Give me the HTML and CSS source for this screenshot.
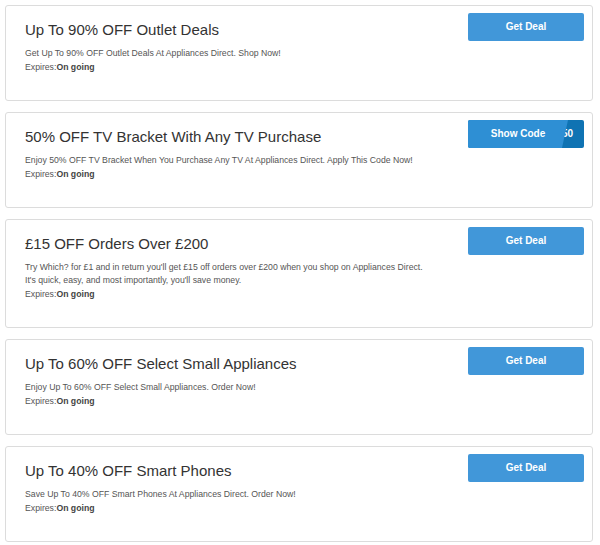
FILE: index.html
```html
<!DOCTYPE html>
<html>
<head>
<meta charset="utf-8">
<link rel="stylesheet" href="styles.css">
</head>
<body>
<div class="list">
  <div class="card">
    <div class="info">
      <h3 class="title">Up To 90% OFF Outlet Deals</h3>
      <p class="desc">Get Up To 90% OFF Outlet Deals At Appliances Direct. Shop Now!</p>
      <p class="expires">Expires:<b>On going</b></p>
    </div>
    <div class="action"><a class="btn deal">Get Deal</a></div>
  </div>
  <div class="card">
    <div class="info">
      <h3 class="title">50% OFF TV Bracket With Any TV Purchase</h3>
      <p class="desc">Enjoy 50% OFF TV Bracket When You Purchase Any TV At Appliances Direct. Apply This Code Now!</p>
      <p class="expires">Expires:<b>On going</b></p>
    </div>
    <div class="action">
      <a class="btn code"><span class="code-val">50</span><span class="code-cover">Show Code</span></a>
    </div>
  </div>
  <div class="card">
    <div class="info">
      <h3 class="title">£15 OFF Orders Over £200</h3>
      <p class="desc">Try Which? for £1 and in return you'll get £15 off orders over £200 when you shop on Appliances Direct.<br>It's quick, easy, and most importantly, you'll save money.</p>
      <p class="expires">Expires:<b>On going</b></p>
    </div>
    <div class="action"><a class="btn deal">Get Deal</a></div>
  </div>
  <div class="card">
    <div class="info">
      <h3 class="title">Up To 60% OFF Select Small Appliances</h3>
      <p class="desc">Enjoy Up To 60% OFF Select Small Appliances. Order Now!</p>
      <p class="expires">Expires:<b>On going</b></p>
    </div>
    <div class="action"><a class="btn deal">Get Deal</a></div>
  </div>
  <div class="card">
    <div class="info">
      <h3 class="title">Up To 40% OFF Smart Phones</h3>
      <p class="desc">Save Up To 40% OFF Smart Phones At Appliances Direct. Order Now!</p>
      <p class="expires">Expires:<b>On going</b></p>
    </div>
    <div class="action"><a class="btn deal">Get Deal</a></div>
  </div>
</div>
</body>
</html>
```
FILE: styles.css
```css
html, body {
  margin: 0;
  padding: 0;
  background: #fff;
}
body {
  font-family: "Liberation Sans", Arial, sans-serif;
}
.list {
  display: flex;
  flex-direction: column;
  gap: 11px;
  padding: 5px 7px 0 5px;
}
.card {
  display: flex;
  border: 1px solid #dcdcdc;
  border-radius: 3px;
  padding: 7px 8px 25px 19px;
}
.info {
  flex: 1;
  min-width: 0;
}
.title {
  margin: 7px 0 0;
  font-size: 15px;
  line-height: 20px;
  font-weight: normal;
  color: #333;
}
.desc {
  margin: 7px 0 0;
  font-size: 8.7px;
  line-height: 13px;
  color: #555;
}
.expires {
  margin: 0;
  font-size: 8.7px;
  line-height: 15px;
  color: #555;
}
.expires b {
  color: #444;
}
.action {
  width: 116px;
  flex: none;
}
.btn {
  display: block;
  height: 28px;
  line-height: 28px;
  border-radius: 2px;
  color: #fff;
  font-size: 10px;
  font-weight: bold;
  text-align: center;
  box-sizing: border-box;
}
.deal {
  background: #4197d9;
}
.code {
  position: relative;
  overflow: hidden;
  background: #0f73b3;
  text-align: right;
}
.code-val {
  padding-right: 11px;
}
.code-cover {
  position: absolute;
  left: 0;
  top: 0;
  bottom: 0;
  right: 16px;
  background: #2e8fd4;
  text-align: center;
  clip-path: polygon(0 0, 100% 0, calc(100% - 6px) 100%, 0 100%);
}
```
